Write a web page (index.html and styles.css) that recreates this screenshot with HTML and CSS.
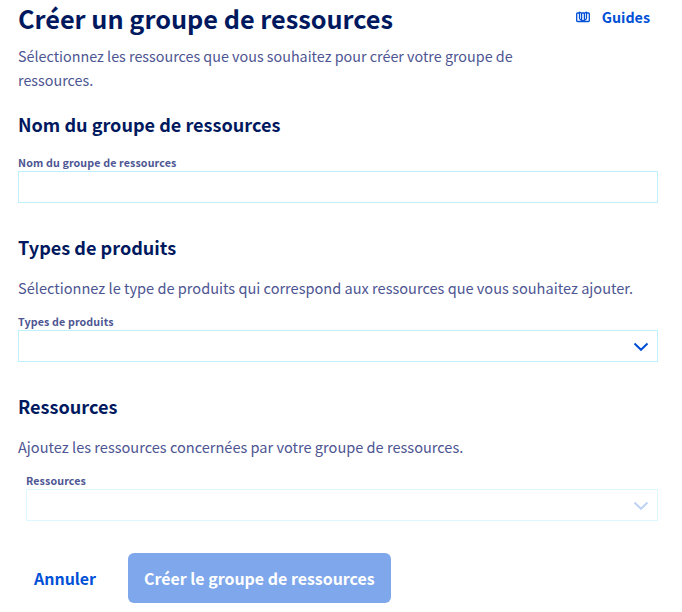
FILE: index.html
```html
<!DOCTYPE html>
<html lang="fr">
<head>
<meta charset="utf-8">
<title>Créer un groupe de ressources</title>
<link rel="stylesheet" href="styles.css">
</head>
<body>
<main class="page">
  <header class="header">
    <h1 class="title">Créer un groupe de ressources</h1>
    <a class="guides"><svg class="guides-icon" viewBox="0 0 14 12"><path d="M3.5 2H1.5Q.7 2 .7 2.8V9.7Q.7 10.5 1.5 10.5H12.5Q13.3 10.5 13.3 9.7V2.8Q13.3 2 12.5 2H10.5M3.5 .8V7.5Q3.7 8.7 5.5 9L7 10L8.5 9Q10.3 8.7 10.5 7.5V.8M3.5 1L5.6 2.3V8.8M10.5 1L8.4 2.3V8.8M5.6 2H8.4"/></svg><span>Guides</span></a>
  </header>
  <p class="text intro">Sélectionnez les ressources que vous souhaitez pour créer votre groupe de ressources.</p>

  <section class="section name">
    <h2 class="heading">Nom du groupe de ressources</h2>
    <label class="label">Nom du groupe de ressources</label>
    <div class="field"></div>
  </section>

  <section class="section types">
    <h2 class="heading">Types de produits</h2>
    <p class="text">Sélectionnez le type de produits qui correspond aux ressources que vous souhaitez ajouter.</p>
    <label class="label">Types de produits</label>
    <div class="field"><svg class="chevron" viewBox="0 0 16 10"><path d="M1.5 1.5L8 7.8L14.5 1.5"/></svg></div>
  </section>

  <section class="section resources">
    <h2 class="heading">Ressources</h2>
    <p class="text">Ajoutez les ressources concernées par votre groupe de ressources.</p>
    <div class="nested">
      <label class="label">Ressources</label>
      <div class="field disabled"><svg class="chevron" viewBox="0 0 16 10"><path d="M1.5 1.5L8 7.8L14.5 1.5"/></svg></div>
    </div>
  </section>

  <footer class="actions">
    <a class="cancel">Annuler</a>
    <a class="submit">Créer le groupe de ressources</a>
  </footer>
</main>
</body>
</html>
```
FILE: styles.css
```css
* { box-sizing: border-box; }
body {
  margin: 0;
  background: #fff;
  color: #4d5592;
  font-family: "Noto Sans CJK SC", "Noto Sans", sans-serif;
}
h1, h2, p { margin: 0; }
.page { width: 682px; height: 612px; padding: 0 24px 0 18px; overflow: hidden; }
.header { display: flex; justify-content: space-between; height: 40px; }
.title { font-size: 25.25px; line-height: 36px; font-weight: 700; color: #00185e; white-space: nowrap; }
.guides { display: flex; align-items: center; height: 32px; margin-right: 8px; font-size: 14.3px; font-weight: 700; color: #0050d7; }
.guides-icon { width: 14px; height: 12px; margin: 1px 12px 0 0; fill: none; stroke: #0050d7; stroke-width: 1.3; }
.text { font-size: 14.57px; line-height: 24px; }
.intro { width: 510px; margin-top: 4px; font-size: 14.33px; }
.section { display: flex; flex-direction: column; }
.name { margin-top: 20px; }
.heading { height: 24px; font-size: 18.08px; line-height: 24px; font-weight: 700; color: #00185e; }
.label { height: 17px; font-size: 10.7px; line-height: 17px; font-weight: 700; letter-spacing: .12px; }
.name .label { margin-top: 18px; }
.field { display: flex; align-items: center; justify-content: flex-end; height: 32px; padding-right: 8px; border: 1px solid #bef1ff; }
.chevron { width: 16px; height: 10px; margin-top: 1px; fill: none; stroke: #0050d7; stroke-width: 2; }
.types, .resources { margin-top: 32px; }
.section .text { margin-top: 17px; }
.text + .label, .nested { margin-top: 13px; }
.nested { display: flex; flex-direction: column; margin-left: 8px; }
.disabled { border-color: #def8ff; }
.disabled .chevron { stroke: #bfd3f5; }
.actions { display: flex; margin-top: 32px; height: 50px; font-size: 15.95px; line-height: 50px; font-weight: 700; }
.cancel { width: 110px; padding-left: 16px; color: #0050d7; }
.submit { width: 263px; padding-left: 16px; border-radius: 6px; background: #7fa7eb; color: #fff; white-space: nowrap; }
```
